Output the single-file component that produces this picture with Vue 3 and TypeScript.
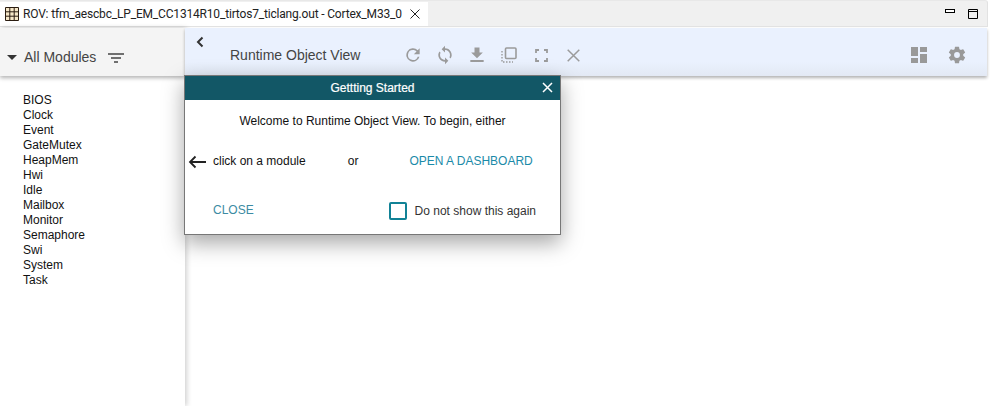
<script setup lang="ts">
const modules: string[] = ['BIOS','Clock','Event','GateMutex','HeapMem','Hwi','Idle','Mailbox','Monitor','Semaphore','Swi','System','Task']
</script>

<template>
  <div class="view">
    <div class="tabbar">
      <div class="tab">
        <svg class="tab-icon" width="14" height="14" viewBox="0 0 14 14"><path d="M.5.5h13v13H.5z" fill="#f6e7c8"/><path d="M.5.500h13v13H.5zM.5 4.800h13M.5 9.200h13M4.800.5v13M9.200.5v13" fill="none" stroke="#2a1c10" stroke-width="1"/></svg>
        <span class="tab-title">ROV: tfm_aescbc_LP_EM_CC1314R10_tirtos7_ticlang.out - Cortex_M33_0</span>
        <svg class="tab-close" width="10" height="10" viewBox="0 0 10 10"><path d="M.5.5l9 9M9.500.5l-9 9" stroke="#222" stroke-width="1" fill="none"/></svg>
      </div>
      <div class="win-controls">
        <svg width="10" height="4" viewBox="0 0 10 4"><rect x=".5" y=".5" width="9" height="3" fill="#fff" stroke="#000"/></svg>
        <svg width="10" height="10" viewBox="0 0 10 10"><path d="M.5.5h9v9h-9zM.5 2.500h9" fill="none" stroke="#000"/></svg>
      </div>
    </div>
    <div class="body">
      <aside class="side">
        <div class="side-head">
          <span class="caret"></span>
          <span class="side-title">All Modules</span>
          <svg class="filter" width="16" height="12" viewBox="0 0 16 12"><path d="M0 2h16M3 6h10M6 10h4" stroke="#444" stroke-width="1.6"/></svg>
        </div>
        <ul class="list">
          <li v-for="m in modules" :key="m">{{ m }}</li>
        </ul>
      </aside>
      <main class="main">
        <div class="main-head">
          <svg class="back" width="8" height="12" viewBox="0 0 8 12"><path d="M6.500 1.500L2 6l4.500 4.500" fill="none" stroke="#333" stroke-width="2"/></svg>
          <span class="main-title">Runtime Object View</span>
          <div class="tools">
            <svg width="20" height="20" viewBox="0 0 24 24"><path d="M17.650 6.350A8 8 0 1 0 19.730 14h-2.080A6 6 0 1 1 12 6c1.660 0 3.140.69 4.220 1.780L13 11h7V4z" fill="#9b9b9b"/></svg>
            <svg width="20" height="20" viewBox="0 0 24 24"><path d="M12 4V1L8 5l4 4V6a6 6 0 0 1 6 6c0 1.010-.25 1.970-.7 2.800l1.460 1.460A8 8 0 0 0 12 4zm0 14a6 6 0 0 1-6-6c0-1.010.25-1.970.7-2.800L5.240 7.740A8 8 0 0 0 12 20v3l4-4-4-4z" fill="#9b9b9b"/></svg>
            <svg width="20" height="20" viewBox="0 0 24 24"><path d="M19 9h-4V3H9v6H5l7 7zM4 18v2.500h16V18z" fill="#9b9b9b"/></svg>
            <svg width="16" height="16" viewBox="0 0 16 16"><rect x="4.500" y="1" width="10.500" height="10.500" rx="1" fill="none" stroke="#9b9b9b" stroke-width="1.600"/><path d="M1 4v11h11" fill="none" stroke="#9b9b9b" stroke-width="1.400" stroke-dasharray="1.500 1.500"/></svg>
            <svg width="13" height="13" viewBox="0 0 13 13"><path d="M1 4V1h3M9 1h3v3M12 9v3H9M4 12H1V9" fill="none" stroke="#9b9b9b" stroke-width="1.800"/></svg>
            <svg width="13" height="13" viewBox="0 0 13 13"><path d="M.7.7l11.600 11.600M12.300.7L.7 12.300" stroke="#9b9b9b" stroke-width="1.500"/></svg>
          </div>
          <div class="tools-right">
            <svg width="16" height="16" viewBox="0 0 16 16"><path d="M0 0h7v9H0zM0 11h7v5H0zM9 0h7v5H9zM9 7h7v9H9z" fill="#999"/></svg>
            <svg width="20" height="20" viewBox="0 0 24 24"><path d="M19.430 12.980c.04-.32.07-.64.07-.98s-.03-.66-.07-.98l2.110-1.650a.5.500 0 0 0 .12-.64l-2-3.460a.5.500 0 0 0-.61-.22l-2.490 1a7.300 7.300 0 0 0-1.690-.98l-.38-2.650A.49.490 0 0 0 14 2h-4a.49.490 0 0 0-.49.420l-.38 2.650a7.700 7.700 0 0 0-1.690.98l-2.490-1a.49.490 0 0 0-.61.22l-2 3.460a.49.490 0 0 0 .12.640l2.110 1.650c-.04.32-.07.65-.07.98s.03.66.07.98l-2.110 1.650a.5.500 0 0 0-.12.640l2 3.460c.12.22.39.3.61.22l2.490-1c.52.4 1.080.73 1.690.98l.38 2.650c.03.24.24.42.49.42h4c.25 0 .46-.18.49-.42l.38-2.650a7.700 7.700 0 0 0 1.690-.98l2.490 1c.23.09.49 0 .61-.22l2-3.460a.5.500 0 0 0-.12-.64zM12 15.500a3.500 3.500 0 1 1 0-7 3.500 3.500 0 0 1 0 7z" fill="#999"/></svg>
          </div>
        </div>
      </main>
    </div>

    <section class="dialog">
      <header class="dlg-head">
        <span>Gettting Started</span>
        <svg class="dlg-x" width="11" height="11" viewBox="0 0 11 11"><path d="M1 1l9 9M10 1l-9 9" stroke="#fff" stroke-width="1.500"/></svg>
      </header>
      <p class="welcome">Welcome to Runtime Object View. To begin, either</p>
      <div class="choice">
        <svg class="arrow" width="19" height="14" viewBox="0 0 19 14"><path d="M18 7H2M7.500 1.500L2 7l5.500 5.500" fill="none" stroke="#222" stroke-width="1.800"/></svg>
        <span class="click">click on a module</span>
        <span class="or">or</span>
        <span class="open">OPEN A DASHBOARD</span>
      </div>
      <div class="foot">
        <span class="close">CLOSE</span>
        <label class="check"><span class="box"></span><span>Do not show this again</span></label>
      </div>
    </section>
  </div>
</template>

<style scoped>
.view {
  position: relative;
  width: 994px;
  height: 406px;
  background: #fff;
  overflow: hidden;
  font-family: "Liberation Sans", Arial, sans-serif;
  font-size: 12px;
  color: #111;
}
.tabbar {
  display: flex;
  align-items: stretch;
  width: 988px;
  height: 27px;
  padding-top: 1px;
  box-sizing: border-box;
  background: #f0f0f0;
  border-top: 1px solid #e8e8e8;
  border-bottom: 1px solid #e2e2e2;
  border-right: 1px solid #e2e2e2;
  border-top-right-radius: 3px;
}
.tab {
  display: flex;
  align-items: center;
  flex: none;
  width: 428px;
  background: #fff;
  padding-left: 5px;
  box-sizing: border-box;
}
.tab-icon { flex: none; }
.tab-title {
  margin-left: 4px;
  white-space: nowrap;
  color: #222;
  font-family: Roboto, "Liberation Sans", sans-serif;
  letter-spacing: -0.18px;
}
.tab-close { flex: none; margin-left: 8px; }
.win-controls {
  margin-left: auto;
  display: flex;
  align-items: flex-start;
  gap: 13px;
  padding: 7px 9px 0 0;
}
.body { display: flex; height: 379px; padding-top: 1px; box-sizing: border-box; }
.side {
  width: 185px;
  flex: none;
  box-shadow: 2px 0 5px rgba(0,0,0,.18);
  position: relative;
}
.side-head {
  display: flex;
  align-items: center;
  height: 48px;
  padding: 10px 0 0 7px;
  box-sizing: border-box;
  background: #f4f4f4;
  box-shadow: 0 2px 4px rgba(0,0,0,.3);
}
.caret {
  width: 0;
  height: 0;
  border-left: 5px solid transparent;
  border-right: 5px solid transparent;
  border-top: 5px solid #333;
}
.side-title { margin-left: 7px; font-size: 14px; color: #444; }
.filter { margin-left: 12px; margin-top: 2px; }
.list {
  list-style: none;
  margin: 0;
  padding: 17px 0 0 23px;
  line-height: 15px;
}
.main { flex: 1; min-width: 0; padding-right: 7px; }
.main-head {
  position: relative;
  display: flex;
  align-items: center;
  height: 48px;
  padding: 6px 0 0 45px;
  box-sizing: border-box;
  background-color: #eaf1fd;
  background-image: linear-gradient(#eaf1fe 70%, #e3e9f4);
  box-shadow: 0 2px 3px rgba(0,0,0,.3);
}
.back { position: absolute; left: 11px; top: 8px; }
.main-title { font-size: 14px; color: #444; }
.tools {
  display: flex;
  align-items: center;
  gap: 12px;
  margin-left: 43px;
}
.tools svg:nth-child(4) { margin-left: 2px; }
.tools svg:nth-child(5) { margin-left: 6px; }
.tools svg:nth-child(6) { margin-left: 7px; }
.tools-right {
  display: flex;
  align-items: center;
  gap: 20px;
  margin-left: auto;
  padding-right: 20px;
}
.dialog {
  position: absolute;
  left: 184px;
  top: 75px;
  width: 377px;
  height: 160px;
  box-sizing: border-box;
  background: #fff;
  border: 1px solid #777;
  box-shadow: 0 8px 20px rgba(0,0,0,.35);
}
.dlg-head {
  position: relative;
  height: 24px;
  background: #125766;
  color: #fff;
  text-align: center;
  line-height: 24px;
  -webkit-text-stroke: 0.2px #fff;
}
.dlg-x { position: absolute; right: 7px; top: 6px; }
.welcome { margin: 14px 0 0; text-align: center; line-height: 14px; }
.choice {
  position: relative;
  display: flex;
  align-items: center;
  height: 16px;
  margin-top: 25px;
  padding-left: 28px;
}
.arrow { position: absolute; left: 3px; top: 2px; }
.or { margin-left: 42px; }
.open { margin-left: 51px; color: #1b8aa8; }
.foot {
  display: flex;
  align-items: center;
  justify-content: space-between;
  margin-top: 33px;
  padding: 0 24px 0 28px;
}
.close { color: #3c8ba3; margin-top: -2px; }
.check { display: flex; align-items: center; gap: 8px; color: #333; }
.box {
  width: 18px;
  height: 18px;
  box-sizing: border-box;
  border: 2px solid #118296;
  border-radius: 2px;
}
</style>
